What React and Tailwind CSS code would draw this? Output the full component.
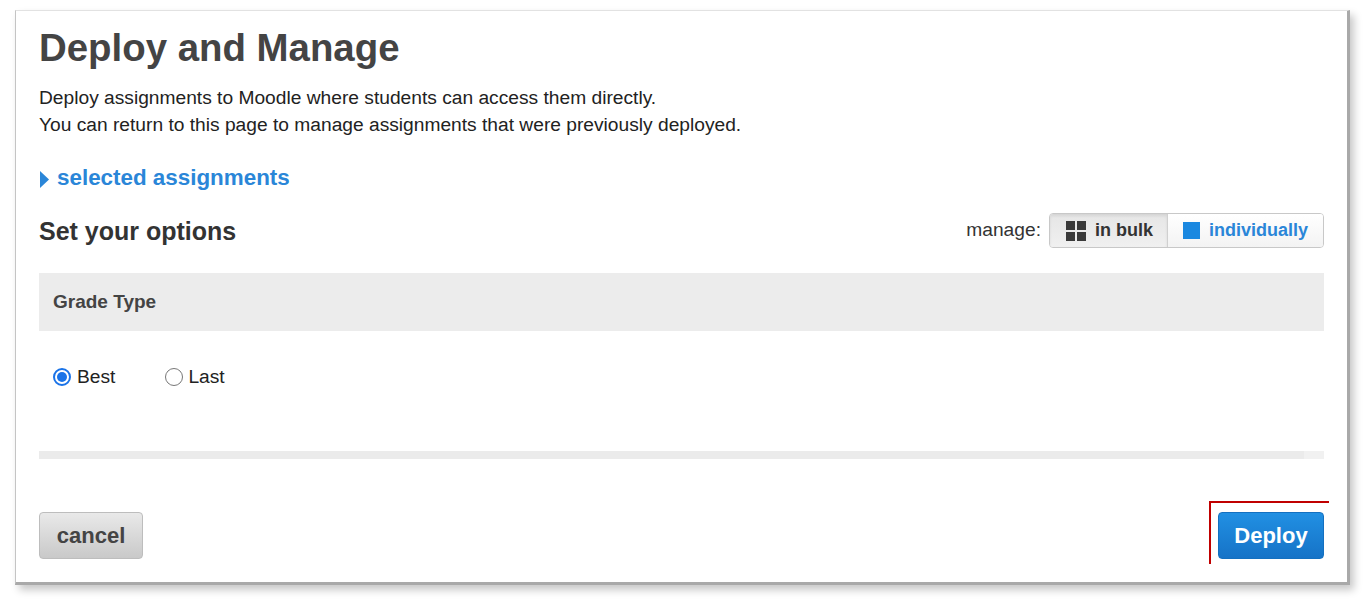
import React from "react";

export default function App() {
  return (
    <div className="min-h-screen bg-white pt-[10px] pl-[15px] font-['Liberation_Sans',Arial,sans-serif]">
      <div className="relative w-[1335px] h-[575px] bg-white border-l border-t border-r-[3px] border-b-[3px] border-l-[#c4c4c4] border-t-[#e2e2e2] border-r-[#a9a9a9] border-b-[#a9a9a9] shadow-[4px_5px_8px_rgba(0,0,0,0.22)] px-[23px] pt-[15px]">
        <h1 className="text-[38.4px] leading-[44px] font-bold text-[#444]">Deploy and Manage</h1>

        <div className="mt-[14px] text-[19.2px] leading-[27px] text-[#222]">
          <p>Deploy assignments to Moodle where students can access them directly.</p>
          <p>You can return to this page to manage assignments that were previously deployed.</p>
        </div>

        <div className="mt-[25px] flex items-center gap-[8px] h-[30px] pl-[1px]">
          <svg width="9" height="17" viewBox="0 0 9 17" className="shrink-0 mt-[3px]">
            <path d="M0 0 L9 8.5 L0 17 Z" fill="#2a86d8" />
          </svg>
          <span className="text-[22.4px] font-bold text-[#2a86d8]">selected assignments</span>
        </div>

        <div className="mt-[20px] flex items-center justify-between h-[35px]">
          <h2 className="text-[25px] font-bold text-[#333] mt-[3px]">Set your options</h2>
          <div className="flex items-center gap-[8px]">
            <span className="text-[19.2px] text-[#333]">manage:</span>
            <div className="flex h-[35px] rounded-[4px] border border-[#c8c8c8] overflow-hidden">
              <button className="flex items-center gap-[9px] pl-[16px] pr-[14px] bg-gradient-to-b from-[#e6e6e6] to-[#f0f0f0] shadow-[inset_0_2px_3px_rgba(0,0,0,0.08)] border-r border-[#d0d0d0]">
                <span className="grid grid-cols-2 gap-[2px]">
                  <span className="w-[9px] h-[9px] bg-[#3a3a3a]" />
                  <span className="w-[9px] h-[9px] bg-[#3a3a3a]" />
                  <span className="w-[9px] h-[9px] bg-[#3a3a3a]" />
                  <span className="w-[9px] h-[9px] bg-[#3a3a3a]" />
                </span>
                <span className="text-[18px] font-bold text-[#333]">in bulk</span>
              </button>
              <button className="flex items-center gap-[9px] pl-[15px] pr-[15px] bg-gradient-to-b from-[#ffffff] to-[#f3f3f3]">
                <span className="w-[17px] h-[17px] bg-[#1a88e0]" />
                <span className="text-[18px] font-bold text-[#2a86d8]">individually</span>
              </button>
            </div>
          </div>
        </div>

        <div className="mt-[25px] h-[58px] bg-[#ececec] flex items-center pl-[14px]">
          <span className="text-[19px] font-bold text-[#444]">Grade Type</span>
        </div>

        <div className="mt-[34px] h-[24px] flex items-center pl-[14px] text-[19.2px] text-[#222]">
          <label className="flex items-center gap-[6px]">
            <span className="w-[18px] h-[18px] rounded-full border-2 border-[#1a73e8] flex items-center justify-center">
              <span className="w-[10px] h-[10px] rounded-full bg-[#1a73e8]" />
            </span>
            Best
          </label>
          <label className="flex items-center gap-[5px] ml-[50px]">
            <span className="w-[18px] h-[18px] rounded-full border border-[#777]" />
            Last
          </label>
        </div>

        <div className="mt-[62px] h-[8px] flex">
          <div className="flex-1 bg-[#ebebeb]" />
          <div className="w-[20px] bg-[#f1f1f1]" />
        </div>

        <div className="mt-[53px] flex items-center justify-between">
          <button className="w-[104px] h-[47px] rounded-[4px] border border-[#bdbdbd] bg-gradient-to-b from-[#e9e9e9] to-[#c9c9c9] text-[22px] font-bold text-[#444]">
            cancel
          </button>
          <button className="w-[106px] h-[47px] rounded-[4px] border border-[#1470c0] bg-gradient-to-b from-[#2190e3] to-[#1673c7] text-[22px] font-bold text-white">
            Deploy
          </button>
        </div>

        <div className="absolute left-[1193px] top-[490px] w-[2px] h-[63px] bg-[#c00000]" />
        <div className="absolute left-[1193px] top-[490px] w-[120px] h-[2px] bg-[#c00000]" />
      </div>
    </div>
  );
}
